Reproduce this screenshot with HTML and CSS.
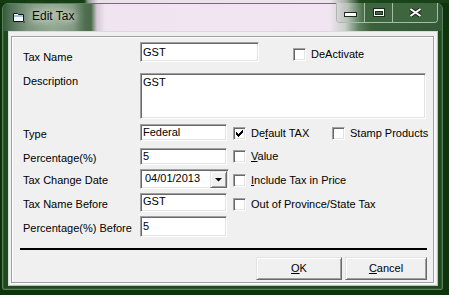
FILE: index.html
```html
<!DOCTYPE html>
<html>
<head>
<meta charset="utf-8">
<title>Edit Tax</title>
<link rel="stylesheet" href="styles.css">
</head>
<body>
<div class="window">
  <div class="titlebar">
    <svg class="appicon" width="13" height="11" viewBox="0 0 13 11">
      <path d="M1.5 1.5h4l1 1h5v7h-10z" fill="#fff" stroke="#111"/>
      <rect x="2" y="3" width="9" height="2" fill="#9cc3e6"/>
      <rect x="11" y="9" width="2" height="2" fill="#555"/>
    </svg>
    <span class="title">Edit Tax</span>
    <div class="caps">
      <span class="cap cap-min">
        <svg width="13" height="9" viewBox="0 0 13 9"><rect x="0.5" y="4.5" width="12" height="4" fill="#fff" stroke="#1c2c1c"/></svg>
      </span>
      <span class="cap cap-max">
        <svg width="12" height="9" viewBox="0 0 12 9"><rect x="0.5" y="0.5" width="11" height="8" fill="#fff" stroke="#1c2c1c"/><rect x="2.5" y="3.5" width="7" height="3" fill="#3f673f" stroke="#1c2c1c"/></svg>
      </span>
      <span class="cap cap-close">
        <svg width="13" height="9" viewBox="0 0 13 9"><path d="M1.5 1L11.5 8M11.5 1L1.5 8" stroke="#1c2c1c" stroke-width="4"/><path d="M1.5 1L11.5 8M11.5 1L1.5 8" stroke="#fff" stroke-width="2"/></svg>
      </span>
    </div>
  </div>
  <div class="chrome">
    <div class="client">
      <div class="frame">
        <div class="row r1">
          <span class="lbl">Tax Name</span>
          <div class="field f-name">GST</div>
          <div class="check c-deact"><span class="box"></span><span class="ctext">DeActivate</span></div>
        </div>
        <div class="row r2">
          <span class="lbl">Description</span>
          <div class="field f-desc">GST</div>
        </div>
        <div class="row r3">
          <span class="lbl">Type</span>
          <div class="field f-short f-type">Federal</div>
          <div class="check c-default">
            <span class="box"><svg class="tick" width="7" height="7" viewBox="0 0 7 7"><path d="M6 0h1v1H6zM5 1h2v1H5zM0 2h1v1H0zM4 2h3v1H4zM0 3h2v1H0zM3 3h3v1H3zM0 4h5v1H0zM1 5h3v1H1zM2 6h1v1H2z" fill="#000"/></svg></span>
            <span class="ctext">De<u>f</u>ault TAX</span>
          </div>
          <div class="check"><span class="box"></span><span class="ctext">Stamp Products</span></div>
        </div>
        <div class="row r4">
          <span class="lbl">Percentage(%)</span>
          <div class="field f-short f-pct">5</div>
          <div class="check c-gap6"><span class="box"></span><span class="ctext"><u>V</u>alue</span></div>
        </div>
        <div class="row r5">
          <span class="lbl">Tax Change Date</span>
          <div class="field f-date">
            <span class="date-text">04/01/2013</span>
            <span class="dd"><svg width="7" height="4" viewBox="0 0 7 4"><path d="M0 0h7L3.5 3.5z" fill="#000"/></svg></span>
          </div>
          <div class="check c-gap4"><span class="box"></span><span class="ctext"><u>I</u>nclude Tax in Price</span></div>
        </div>
        <div class="row r6">
          <span class="lbl">Tax Name Before</span>
          <div class="field f-short f-before">GST</div>
          <div class="check c-gap6"><span class="box"></span><span class="ctext">Out of Province/State Tax</span></div>
        </div>
        <div class="row r7">
          <span class="lbl">Percentage(%) Before</span>
          <div class="field f-short f-pctb">5</div>
        </div>
        <div class="sep"></div>
        <div class="buttons">
          <div class="btn btn-ok"><span><u>O</u>K</span></div>
          <div class="btn btn-cancel"><span><u>C</u>ancel</span></div>
        </div>
      </div>
    </div>
  </div>
</div>
</body>
</html>
```

FILE: styles.css
```css
* { box-sizing: border-box; }
html, body { margin: 0; padding: 0; }
body {
  width: 449px;
  height: 295px;
  overflow: hidden;
  background:
    linear-gradient(90deg, #103c10 0, #143f14 84px, #8e9a8e 88px, #b9b2b9 92px, #ecdfec 98px, #efe3ef 330px, #9fae9f 346px, #1c481c 360px, #173f17 449px) top left / 100% 3px no-repeat,
    #0d340d;
  font-family: "Liberation Sans", Arial, sans-serif;
  font-size: 11px;
  color: #000;
}
u { text-decoration: underline; text-underline-offset: 1px; }

.window {
  margin: 3px 6px 0 2px;
  height: 287px;
  border: 1px solid #5a805a;
  border-radius: 6px 6px 2px 2px;
  background: #1f4a1f;
  box-shadow: inset 1px 0 0 #2f5a2f, inset -1px 0 0 #2f5a2f, inset 0 -1px 0 #2f5a2f;
  display: flex;
  flex-direction: column;
}

.titlebar {
  height: 27px;
  display: flex;
  align-items: flex-start;
  padding-left: 9px;
  border-radius: 5px 5px 0 0;
  background: linear-gradient(90deg, #345a34 0, #52725a 8px, #7b937b 24px, #93a893 50px, #809880 70px, #4f6f4f 82px, #4a6a4a 88px, #d6c9d6 94px, #f1e4f1 102px, #f2e5f2 326px, #c9cfc9 342px, #5f815f 356px, #3a613a 368px, #33593a 439px);
}
.appicon { margin-top: 8px; flex: none; }
.title {
  margin-left: 7px;
  margin-top: 5px;
  font-size: 12px;
  line-height: 15px;
  color: #0a0a0a;
  text-shadow: 0 0 6px #e4e9e4, 0 0 10px #d9e0d9, 0 0 14px #cfd8cf;
}
.caps {
  margin-left: auto;
  margin-right: 4px;
  margin-top: -1px;
  height: 20px;
  display: flex;
  border: 1px solid #a9bba9;
  border-top: 0;
  border-radius: 0 0 4px 4px;
  overflow: hidden;
}
.cap {
  height: 19px;
  display: flex;
  justify-content: center;
  align-items: flex-start;
  padding-top: 5px;
  background: #3e663e;
}
.cap-min {
  width: 27px;
  background: linear-gradient(90deg, #ddd2dd 0, #b7bfb7 40%, #5e805e 85%, #476d47 100%);
}
.cap-max { width: 28px; border-left: 1px solid #a9bba9; }
.cap-close { width: 45px; border-left: 1px solid #a9bba9; }

.chrome {
  flex: 1;
  padding: 0 4px 3px 5px;
}
.client {
  height: 255px;
  border: 1px solid;
  border-color: #d6ddd6 #b9c3b9 #b9c3b9 #d6ddd6;
  background: #f0f0f0;
  padding: 4px 0 0 2px;
}
.frame {
  width: 423px;
  height: 247px;
  border: 1px solid #a0a0a0;
  box-shadow: inset 1px 1px 0 #fff, 1px 1px 0 #fff;
  padding-left: 8px;
}

.row {
  display: flex;
  align-items: flex-start;
  padding-left: 3px;
}
.lbl {
  width: 117px;
  flex: none;
  line-height: 13px;
  white-space: nowrap;
}
.field {
  flex: none;
  background: #fff;
  border: 1px solid;
  border-color: #a0a0a0 #fff #fff #a0a0a0;
  box-shadow: inset 1px 1px 0 #696969, inset -1px -1px 0 #e3e3e3;
  line-height: 13px;
  padding-left: 2px;
  white-space: nowrap;
  overflow: hidden;
}
.f-short { width: 87px; }

.check {
  display: flex;
  align-items: center;
  flex: none;
}
.box {
  width: 13px;
  height: 13px;
  flex: none;
  background: #fff;
  border: 1px solid;
  border-color: #a0a0a0 #fff #fff #a0a0a0;
  box-shadow: inset 1px 1px 0 #696969, inset -1px -1px 0 #e3e3e3;
  padding: 2px 0 0 2px;
}
.tick { display: block; }
.ctext {
  margin-left: 5px;
  line-height: 13px;
  white-space: nowrap;
}

.r1 { margin-top: 5px; }
.r1 .lbl { padding-top: 9px; }
.f-name { width: 119px; height: 20px; padding-top: 3px; }
.c-deact { margin-left: 34px; margin-top: 6px; }

.r2 { margin-top: 9px; }
.r2 .lbl { padding-top: 2px; }
.f-desc { width: 286px; height: 46px; padding-top: 2px; }

.r3 { margin-top: 5px; }
.r3 .lbl { padding-top: 4px; }
.f-type { height: 17px; padding-top: 1px; }
.r3 .check { margin-top: 3px; }
.c-default { margin-left: 6px; width: 99px; }

.r4 { margin-top: 7px; }
.r4 .lbl { padding-top: 4px; }
.f-pct { height: 17px; padding-top: 1px; }
.r4 .check { margin-top: 2px; }
.c-gap6 { margin-left: 6px; }

.r5 { margin-top: 4px; }
.r5 .lbl { padding-top: 5px; }
.f-date {
  width: 89px;
  height: 20px;
  display: flex;
  align-items: flex-start;
  padding-left: 4px;
}
.date-text { flex: 1; padding-top: 2px; }
.dd {
  width: 17px;
  height: 17px;
  margin: 1px 1px 0 0;
  display: flex;
  align-items: center;
  justify-content: center;
  background: #f0f0f0;
  border: 1px solid;
  border-color: #e3e3e3 #696969 #696969 #e3e3e3;
  box-shadow: inset 1px 1px 0 #fff, inset -1px -1px 0 #a0a0a0;
}
.dd svg { display: block; margin-top: 1px; }
.r5 .check { margin-top: 5px; }
.c-gap4 { margin-left: 4px; }

.r6 { margin-top: 4px; }
.r6 .lbl { padding-top: 5px; }
.f-before { height: 19px; padding-top: 1px; }
.r6 .check { margin-top: 5px; }

.r7 { margin-top: 4px; }
.r7 .lbl { padding-top: 6px; }
.f-pctb { height: 21px; padding-top: 3px; }

.sep {
  margin-top: 11px;
  width: 407px;
  height: 2px;
  background: #000;
}

.buttons {
  margin-top: 7px;
  display: flex;
  justify-content: flex-end;
  gap: 3px;
  padding-right: 6px;
}
.btn {
  height: 23px;
  display: flex;
  align-items: center;
  justify-content: center;
  line-height: 13px;
  background: #f0f0f0;
  border: 1px solid;
  border-color: #e3e3e3 #696969 #696969 #e3e3e3;
  box-shadow: inset 1px 1px 0 #fff, inset -1px -1px 0 #a0a0a0;
}
.btn-ok { width: 86px; }
.btn-cancel { width: 82px; }
```
